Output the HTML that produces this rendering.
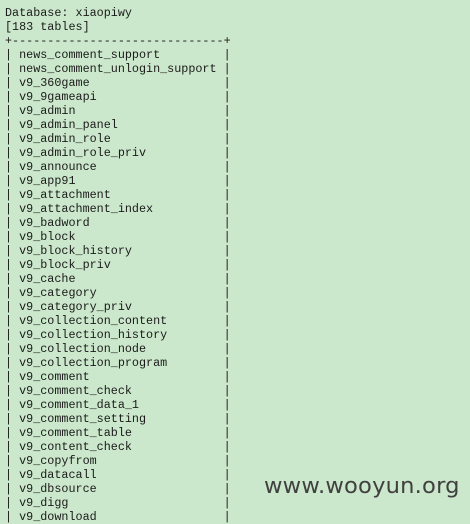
<!DOCTYPE html><html><head><style>
html,body{margin:0;width:470px;height:514px;overflow:hidden;background:#cce8cc}
pre{margin:0;position:absolute;left:5px;top:6px;font-family:"Liberation Mono",monospace;font-size:11.75px;line-height:14px;color:#1a1a1a}
.w{position:absolute;left:264px;top:473px;font-family:"DejaVu Sans","Liberation Sans",sans-serif;font-size:22.6px;color:#404040;letter-spacing:0.2px}
</style></head><body><pre>Database: xiaopiwy
[183 tables]
+------------------------------+
| news_comment_support         |
| news_comment_unlogin_support |
| v9_360game                   |
| v9_9gameapi                  |
| v9_admin                     |
| v9_admin_panel               |
| v9_admin_role                |
| v9_admin_role_priv           |
| v9_announce                  |
| v9_app91                     |
| v9_attachment                |
| v9_attachment_index          |
| v9_badword                   |
| v9_block                     |
| v9_block_history             |
| v9_block_priv                |
| v9_cache                     |
| v9_category                  |
| v9_category_priv             |
| v9_collection_content        |
| v9_collection_history        |
| v9_collection_node           |
| v9_collection_program        |
| v9_comment                   |
| v9_comment_check             |
| v9_comment_data_1            |
| v9_comment_setting           |
| v9_comment_table             |
| v9_content_check             |
| v9_copyfrom                  |
| v9_datacall                  |
| v9_dbsource                  |
| v9_digg                      |
| v9_download                  |</pre><div class="w">www.wooyun.org</div></body></html>
